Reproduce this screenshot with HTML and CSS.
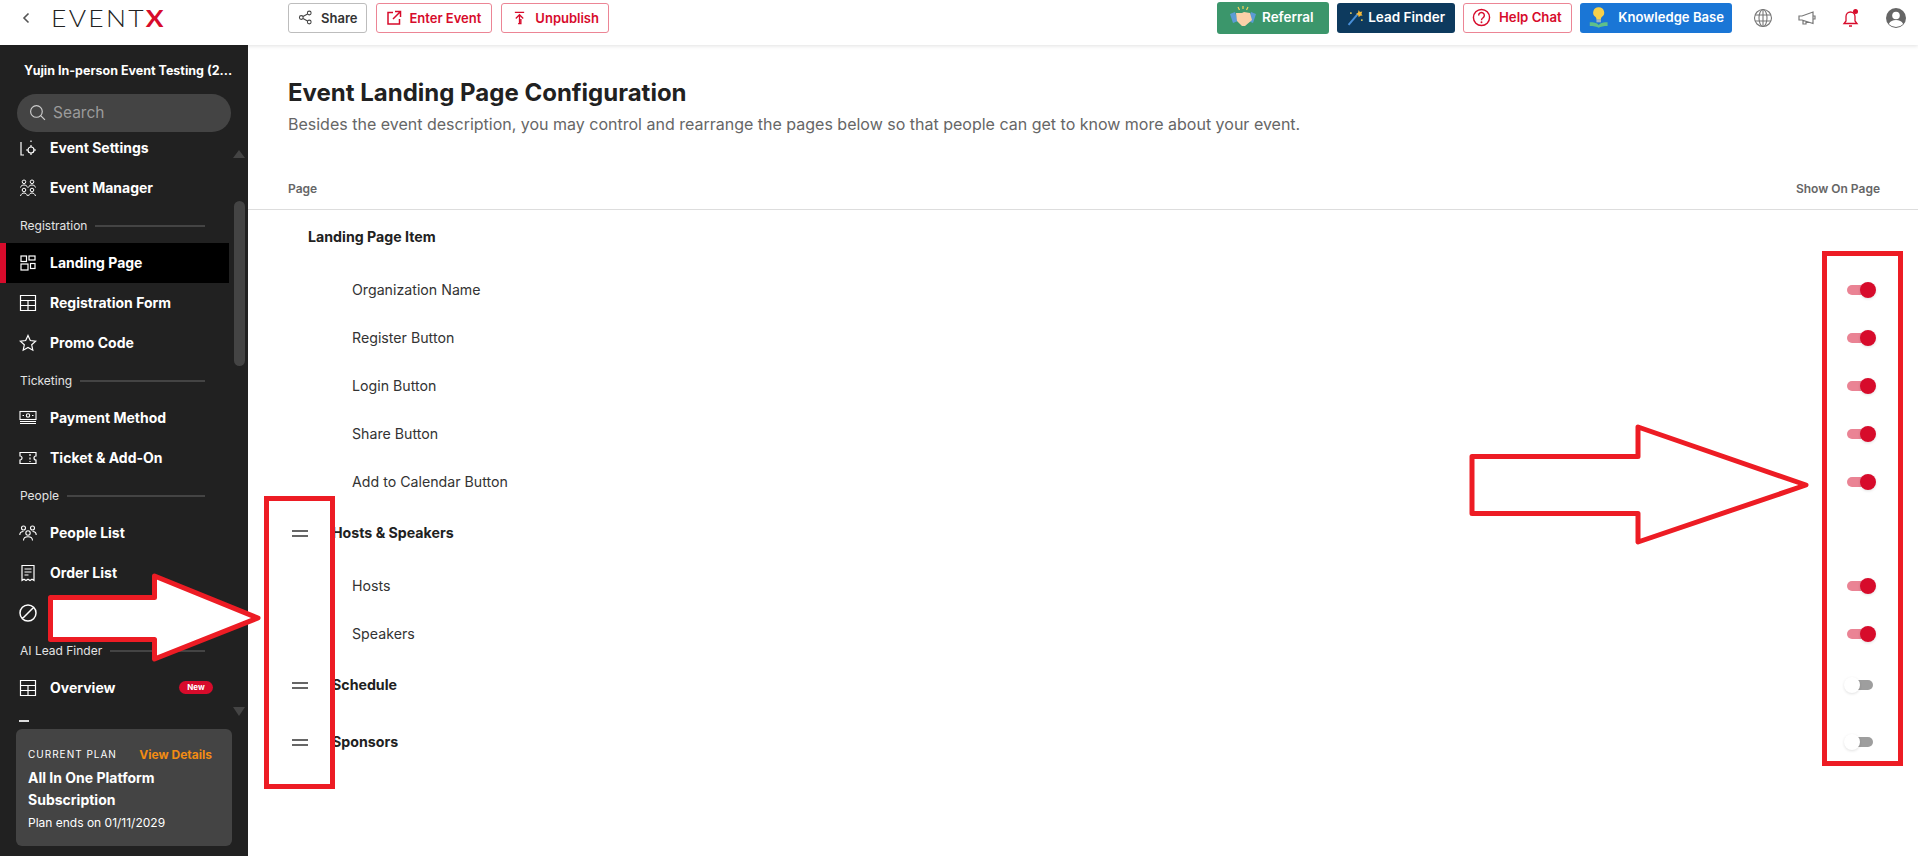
FILE: index.html
```html
<!DOCTYPE html>
<html lang="en">
<head>
<meta charset="utf-8">
<title>Event Landing Page Configuration</title>
<link rel="stylesheet" href="styles.css">
</head>
<body>
<header class="topbar">
  <svg class="back" viewBox="0 0 10 14" width="10" height="14"><path d="M7.500 2.500 3 7l4.500 4.500" fill="none" stroke="#555" stroke-width="1.600"/></svg>
  <div class="logo-box"><div class="logo">EVENT<span class="logo-x">X</span></div></div>
  <div class="actions">
    <button class="btn btn-share"><svg viewBox="0 0 16 16" width="15" height="15"><g fill="none" stroke="#444" stroke-width="1.100"><circle cx="3.500" cy="8" r="2"/><circle cx="12" cy="3.200" r="2"/><circle cx="12" cy="12.800" r="2"/><path d="M5.300 7 10.200 4.200M5.300 9l4.900 2.800"/></g></svg>Share</button>
    <button class="btn btn-red btn-enter"><svg viewBox="0 0 16 16" width="16" height="16"><path d="M7 2.500H2v11.500h11.500V9M9 1.500h5.500V7M14 2 7 9" fill="none" stroke="#d70b2b" stroke-width="1.500"/></svg>Enter Event</button>
    <button class="btn btn-red btn-unpub"><svg viewBox="0 0 14 16" width="13" height="16"><path d="M2 2h10M7 14V5M3 8.500 7 4.500l4 4M5.500 14h3V9" fill="none" stroke="#d70b2b" stroke-width="1.400"/></svg>Unpublish</button>
  </div>
  <div class="tools">
    <button class="pill pill-green"><svg viewBox="0 0 28 24" width="28" height="24"><path d="M1 9l5-2 3 9-5 2zM27 9l-5-2-3 9 5 2z" fill="#5b9bd5"/><path d="M7 8h6l2-1 6 1 2 7-7 6h-3l-5-5z" fill="#fbd0a8"/><path d="M14 1v3M9 2l1.500 3M19 2l-1.500 3" stroke="#f5d35a" stroke-width="1.200"/></svg>Referral</button>
    <button class="pill pill-navy"><svg viewBox="0 0 22 24" width="22" height="24"><path d="M2 22 14 8" stroke="#4a90d9" stroke-width="2.500"/><path d="m15 3 1.500 2.500 3-.5-1 3 1.500 2-3 .3-2 2-.7-3-2.800-1 2.500-1.800z" fill="#f5b93a"/><circle cx="5" cy="7" r="1.200" fill="#f5d35a"/><circle cx="19" cy="16" r="1.200" fill="#f5d35a"/></svg>Lead Finder</button>
    <button class="pill pill-outline"><svg viewBox="0 0 20 20" width="19" height="19"><circle cx="10" cy="10" r="8.500" fill="none" stroke="#d70b2b" stroke-width="1.500"/><path d="M7 7.800a3 3 0 1 1 4.600 2.500c-1 .7-1.600 1.200-1.600 2.500" fill="none" stroke="#d70b2b" stroke-width="1.500"/><circle cx="10" cy="15" r="1" fill="#d70b2b"/></svg>Help Chat</button>
    <button class="pill pill-blue"><svg viewBox="0 0 24 26" width="22" height="24"><path d="M12 2a6 6 0 0 0-3.500 11c.7.700 1 1.500 1 3h5c0-1.500.3-2.300 1-3A6 6 0 0 0 12 2z" fill="#f7d04a"/><rect x="9.500" y="16" width="5" height="3" fill="#9fb4c4"/><path d="M2 19c4 0 8 .5 10 3 2-2.500 6-3 10-3v4c-4 0-8 .5-10 2-2-1.500-6-2-10-2z" fill="#5fc08a"/></svg>Knowledge Base</button>
    <svg class="tool-icon" viewBox="0 0 20 20" width="20" height="20"><g fill="none" stroke="#777" stroke-width="1.100"><circle cx="10" cy="10" r="8.500"/><ellipse cx="10" cy="10" rx="4" ry="8.500"/><path d="M10 1.500v17M2 7h16M2 13h16"/></g></svg>
    <svg class="tool-icon" viewBox="0 0 20 20" width="20" height="20"><path d="M2 8v4h3l11 3.500V4L5 8zM6 12.500V16h3v-2.500M16 8h2v3h-2" fill="none" stroke="#777" stroke-width="1.200"/></svg>
    <svg class="tool-icon" viewBox="0 0 20 20" width="20" height="20"><path d="M3 15.500h13l-2-2.500V8.500a4.500 4.500 0 0 0-9 0V13zM8 18h3" fill="none" stroke="#d70b2b" stroke-width="1.300"/><circle cx="14.500" cy="3.500" r="2.500" fill="#d70b2b"/></svg>
    <svg class="tool-icon" viewBox="0 0 22 22" width="22" height="22"><circle cx="11" cy="11" r="10" fill="#666"/><circle cx="11" cy="8.500" r="3.800" fill="#fff"/><path d="M3.800 17c1.500-3 4-4 7.200-4s5.700 1 7.200 4a10 10 0 0 1-14.400 0z" fill="#fff"/></svg>
  </div>
</header>

<div class="layout">
  <aside class="sidebar">
    <div class="event-name">Yujin In-person Event Testing (2...</div>
    <div class="search">
      <svg viewBox="0 0 16 16" width="17" height="17"><circle cx="7" cy="7" r="5.500" fill="none" stroke="#ccc" stroke-width="1.100"/><path d="m11 11 4 4" stroke="#ccc" stroke-width="1.100"/></svg>
      <span>Search</span>
    </div>
    <div class="nav-wrap">
      <nav class="nav">
        <div class="nav-inner">
          <a class="item"><svg viewBox="0 0 18 18" width="18" height="18"><g fill="none" stroke="#fff" stroke-width="1.200"><path d="M2 3v13h3"/><circle cx="12" cy="11" r="3"/><path d="M12 6v2M12 14v2M7 11h2M15 11h2M12 1.500v1.500"/></g></svg>Event Settings</a>
          <a class="item"><svg viewBox="0 0 18 18" width="18" height="18"><g fill="none" stroke="#fff" stroke-width="1"><circle cx="5" cy="2.800" r="1.800"/><circle cx="13" cy="2.800" r="1.800"/><path d="M1.500 8.500c.5-2 2-2.500 3.500-2.500s3 .5 3.500 2.500M9.500 8.500c.5-2 2-2.500 3.500-2.500s3 .5 3.500 2.500"/><circle cx="5" cy="11" r="1.800"/><circle cx="13" cy="11" r="1.800"/><path d="M1.500 17c.5-2 2-3 3.500-3s3 1 3.500 3M9.500 17c.5-2 2-3 3.500-3s3 1 3.500 3"/></g></svg>Event Manager</a>
          <div class="label">Registration<i></i></div>
          <a class="item active"><svg viewBox="0 0 18 18" width="18" height="18"><g fill="none" stroke="#fff" stroke-width="1.200"><rect x="2" y="2" width="5.500" height="5.500"/><rect x="10" y="2" width="6" height="4"/><rect x="2" y="10" width="7" height="6"/><rect x="11.500" y="9.500" width="4.500" height="5"/></g></svg>Landing Page</a>
          <a class="item"><svg viewBox="0 0 18 18" width="18" height="18"><path d="M1.500 1.500h15v15h-15zM1.500 6.500h15M1.500 11.500h15M9 6.500v10" fill="none" stroke="#fff" stroke-width="1.200"/></svg>Registration Form</a>
          <a class="item"><svg viewBox="0 0 18 18" width="18" height="18"><path d="m9 1.500 2.300 5 5.400.6-4 3.700 1.100 5.400L9 13.500l-4.800 2.700 1.100-5.400-4-3.700 5.400-.6z" fill="none" stroke="#fff" stroke-width="1.200"/></svg>Promo Code</a>
          <div class="label">Ticketing<i></i></div>
          <a class="item"><svg viewBox="0 0 18 18" width="18" height="18"><g fill="none" stroke="#fff" stroke-width="1.100"><rect x="1" y="2.500" width="16" height="8"/><circle cx="9" cy="6.500" r="1.700"/><path d="M1 12.500h16M1 14.500h16M3.500 6.500h1.500M13 6.500h1.500"/></g></svg>Payment Method</a>
          <a class="item"><svg viewBox="0 0 18 18" width="18" height="18"><path d="M1 3.500h16v3.500a2 2 0 0 0 0 4v3.500H1V11a2 2 0 0 0 0-4zM11 5v2M11 8.500v2M11 12v1" fill="none" stroke="#fff" stroke-width="1.200"/></svg>Ticket &amp; Add-On</a>
          <div class="label">People<i></i></div>
          <a class="item"><svg viewBox="0 0 18 18" width="18" height="18"><g fill="none" stroke="#fff" stroke-width="1.100"><circle cx="4.500" cy="4" r="2"/><circle cx="13.500" cy="4" r="2"/><circle cx="9" cy="9" r="2.200"/><path d="M.8 11c0-2 1.500-3.500 3.700-3.500M17.200 11c0-2-1.500-3.500-3.700-3.500M4.500 16.500c0-2.500 2-3.800 4.500-3.800s4.500 1.300 4.500 3.800"/></g></svg>People List</a>
          <a class="item"><svg viewBox="0 0 18 18" width="18" height="18"><path d="M3 1.500h12v15l-2-1.300-2 1.300-2-1.300-2 1.300-2-1.300-2 1.300zM5.500 5h7M5.500 8h7M5.500 11h4" fill="none" stroke="#fff" stroke-width="1.200"/></svg>Order List</a>
          <a class="item"><svg viewBox="0 0 18 18" width="18" height="18"><path d="M9 1a8 8 0 1 0 0 16A8 8 0 0 0 9 1zM14.500 3.500l-11 11" fill="none" stroke="#fff" stroke-width="1.500"/></svg></a>
          <div class="label">AI Lead Finder<i></i></div>
          <a class="item"><svg viewBox="0 0 18 18" width="18" height="18"><path d="M1.500 1.500h15v15h-15zM1.500 6.500h15M1.500 11.500h15M9 6.500v10" fill="none" stroke="#fff" stroke-width="1.200"/></svg>Overview<span class="badge">New</span></a>
          <i class="label-stub"></i>
        </div>
      </nav>
      <div class="scroll">
        <span class="scroll-up"></span>
        <span class="scroll-thumb"></span>
        <span class="scroll-down"></span>
      </div>
    </div>
    <div class="plan">
      <div class="plan-top"><span class="plan-tag">CURRENT PLAN</span><span class="plan-link">View Details</span></div>
      <div class="plan-name">All In One Platform Subscription</div>
      <div class="plan-end">Plan ends on 01/11/2029</div>
    </div>
  </aside>

  <main class="main">
    <h1 class="title">Event Landing Page Configuration</h1>
    <p class="subtitle">Besides the event description, you may control and rearrange the pages below so that people can get to know more about your event.</p>
    <div class="table-head"><span>Page</span><span>Show On Page</span></div>

    <div class="row-head row-plain"><span>Landing Page Item</span></div>
    <div class="row"><span>Organization Name</span><span class="switch on"></span></div>
    <div class="row"><span>Register Button</span><span class="switch on"></span></div>
    <div class="row"><span>Login Button</span><span class="switch on"></span></div>
    <div class="row"><span>Share Button</span><span class="switch on"></span></div>
    <div class="row"><span>Add to Calendar Button</span><span class="switch on"></span></div>

    <div class="row-head"><i class="drag"></i><span>Hosts &amp; Speakers</span></div>
    <div class="row"><span>Hosts</span><span class="switch on"></span></div>
    <div class="row"><span>Speakers</span><span class="switch on"></span></div>

    <div class="row-head row-gap"><i class="drag"></i><span>Schedule</span><span class="switch"></span></div>
    <div class="row-head"><i class="drag"></i><span>Sponsors</span><span class="switch"></span></div>
  </main>
</div>

<svg class="marks" viewBox="0 0 1918 856" width="1918" height="856">
  <g fill="none" stroke="#ed1c24" stroke-width="5">
    <rect x="266.500" y="498.500" width="66" height="288"/>
    <rect x="1824.500" y="253.500" width="76" height="510"/>
    <path fill="#fff" stroke-linejoin="round" d="M50.500 597.500H154.500V576L258 618 154.500 659V639.500H50.500z"/>
    <path fill="#fff" stroke-linejoin="round" d="M1472 456.500H1638V427L1806 485 1638 542V513.500H1472z"/>
  </g>
</svg>
</body>
</html>
```
FILE: styles.css
```css
* { box-sizing: border-box; }
html, body { margin: 0; height: 100%; }
body {
  position: relative;
  width: 1918px;
  height: 856px;
  overflow: hidden;
  background: #fff;
  color: #212121;
  font-family: "Inter", "Noto Sans", sans-serif;
}
button { font-family: inherit; cursor: pointer; }

/* Top bar */
.topbar {
  position: relative;
  z-index: 2;
  display: flex;
  align-items: center;
  height: 45px;
  padding: 0 11px 10px 21px;
  background: #fff;
  box-shadow: 0 1px 4px rgba(0, 0, 0, .12);
}
.back { flex: none; }
.logo-box { flex: none; width: 112px; margin-left: 20px; }
.logo {
  font-family: "Lato", sans-serif;
  font-weight: 300;
  font-size: 23px;
  line-height: 24px;
  letter-spacing: 2px;
  color: #222;
  white-space: nowrap;
  transform: scaleX(1.150);
  transform-origin: left center;
}
.logo-x { color: #d70b2b; font-weight: 700; }
.actions { display: flex; gap: 9px; margin-left: 125px; }
.btn {
  display: flex;
  align-items: center;
  gap: 9px;
  height: 30px;
  padding: 0 9px;
  background: #fff;
  border: 1px solid #bdbdbd;
  border-radius: 3px;
  font-size: 13px;
  font-weight: 600;
  color: #333;
  white-space: nowrap;
}
.btn-share { gap: 8px; }
.btn-red { border-color: #ec8595; color: #d70b2b; }
.btn-enter { gap: 7px; padding: 0 10px 0 9px; }
.btn-unpub { gap: 9px; padding-left: 11px; }
.tools { display: flex; align-items: center; margin-left: auto; }
.pill {
  display: flex;
  align-items: center;
  gap: 8px;
  height: 30px;
  margin-right: 8px;
  padding: 0 10px 1px;
  border: 0;
  border-radius: 3px;
  font-size: 13px;
  font-weight: 600;
  color: #fff;
  white-space: nowrap;
}
.pill-green { width: 112px; height: 32px; padding: 0 12px 1px; background: #3b966b; gap: 5px; font-size: 13.500px; }
.pill-navy { width: 118px; background: #0d3a5e; gap: 4px; font-size: 13.500px; }
.pill-outline { width: 109px; background: #fff; border: 1px solid #ec8595; color: #d70b2b; padding: 0 8px 1px; font-size: 13.200px; }
.pill-blue { width: 152px; background: #1a76d6; margin-right: 21px; padding: 0 8px 1px; gap: 9px; font-size: 13.100px; }
.tool-icon { flex: none; margin-right: 24px; }
.tool-icon:last-child { margin-right: 0; }

/* Sidebar */
.layout { display: flex; height: 811px; }
.sidebar {
  display: flex;
  flex-direction: column;
  flex: none;
  width: 248px;
  background: #212121;
  color: #fff;
}
.event-name {
  padding: 16px 0 0 24px;
  font-size: 12.500px;
  font-weight: 700;
  line-height: 20px;
  white-space: nowrap;
}
.search {
  display: flex;
  align-items: center;
  gap: 7px;
  height: 38px;
  margin: 13px 17px 0;
  padding-left: 12px;
  padding-bottom: 1px;
  background: #444;
  border-radius: 19px;
  font-size: 15.500px;
  color: #9b9b9b;
}
.nav-wrap { display: flex; flex: 1; min-height: 0; }
.nav { width: 229px; flex: none; overflow: hidden; }
.nav-inner { margin-top: -4px; }
.item {
  display: flex;
  align-items: center;
  gap: 13px;
  height: 40px;
  padding-left: 19px;
  padding-bottom: 1px;
  font-size: 14px;
  font-weight: 700;
  color: #fff;
  white-space: nowrap;
}
.item svg { flex: none; margin-bottom: -1px; }
.item.active { background: #000; border-left: 6px solid #d70b2b; padding-left: 13px; }
.label {
  display: flex;
  align-items: center;
  gap: 8px;
  width: 205px;
  height: 35px;
  padding-left: 20px;
  font-size: 12px;
  color: #e4e4e4;
  white-space: nowrap;
}
.label i { flex: 1; height: 2px; background: #444; }
.label-stub { display: block; width: 10px; height: 2px; margin: 12px 0 0 19px; background: #ddd; }
.badge {
  margin-left: auto;
  margin-right: 16px;
  width: 34px;
  height: 13px;
  background: #d70b2b;
  border-radius: 7px;
  font-size: 8px;
  line-height: 13px;
  text-align: center;
}
.scroll { display: flex; flex-direction: column; align-items: center; width: 12px; margin-left: 4px; padding-top: 18px; }
.scroll-up { width: 0; height: 0; border: solid transparent; border-width: 0 6px 8px; border-bottom-color: #444; }
.scroll-thumb { width: 11px; height: 165px; margin-top: 43px; background: #444; border-radius: 6px; }
.scroll-down { width: 0; height: 0; margin-top: 341px; border: solid transparent; border-width: 9px 6px 0; border-top-color: #444; }
.plan {
  height: 117px;
  margin: 7px 16px 10px;
  padding: 16px 20px 0 12px;
  background: #444;
  border-radius: 6px;
}
.plan-top { display: flex; justify-content: space-between; align-items: center; height: 18px; }
.plan-tag { font-size: 10px; letter-spacing: 1px; }
.plan-link { font-size: 12px; font-weight: 700; color: #f28c13; }
.plan-name { margin-top: 4px; font-size: 14px; font-weight: 700; line-height: 22px; }
.plan-end { margin-top: 1px; font-size: 12px; line-height: 22px; }

/* Main */
.main { flex: 1; min-width: 0; padding-top: 32px; }
.title { margin: 0 0 0 40px; font-size: 24px; font-weight: 700; line-height: 32px; color: #212121; }
.subtitle { margin: 3px 0 0 40px; font-size: 16px; line-height: 24px; color: #666; }
.table-head {
  display: flex;
  justify-content: space-between;
  align-items: center;
  height: 41px;
  margin-top: 33px;
  padding: 0 38px 2px 40px;
  border-bottom: 1px solid #ddd;
  font-size: 12px;
  font-weight: 600;
  color: #666;
}
.row, .row-head { display: flex; align-items: center; }
.row { justify-content: space-between; height: 48px; padding: 0 45px 2px 104px; font-size: 14.200px; color: #333; }
.row .switch { margin-top: 2px; }
.row-head {
  height: 56px;
  padding: 0 45px 3px 44px;
  font-size: 14.200px;
  font-weight: 700;
  color: #212121;
}
.row-head .switch { margin-left: auto; margin-top: 1px; }
.row-plain { padding-left: 60px; }
.row-gap { margin-bottom: 1px; }
.drag {
  flex: none;
  width: 16px;
  height: 7px;
  margin-top: 1px;
  margin-right: 24px;
  border-top: 2px solid #666;
  border-bottom: 2px solid #666;
}
.switch { position: relative; flex: none; width: 26px; height: 10px; background: #9e9e9e; border-radius: 5px; }
.switch::after {
  content: "";
  position: absolute;
  top: -3px;
  left: -3px;
  width: 16px;
  height: 16px;
  background: #fff;
  border-radius: 50%;
  box-shadow: 0 1px 3px rgba(0, 0, 0, .12);
}
.switch.on { background: #ea8394; }
.switch.on::after { left: 13px; background: #d70b2b; }

/* Annotations drawn on top of the screenshot */
.marks { position: absolute; left: 0; top: 0; z-index: 3; pointer-events: none; }
```
